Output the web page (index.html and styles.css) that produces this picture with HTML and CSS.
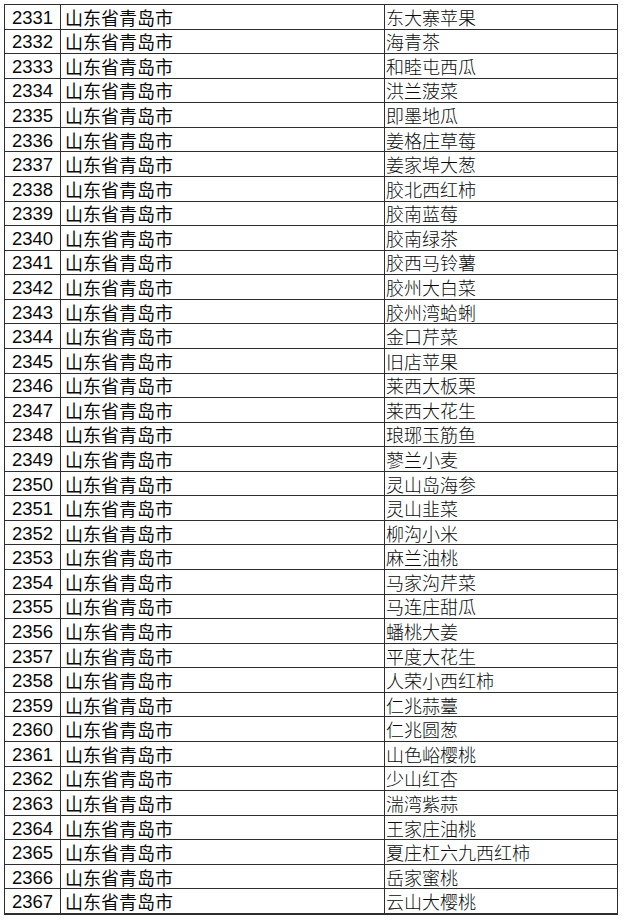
FILE: index.html
```html
<!DOCTYPE html>
<html lang="zh">
<head>
<meta charset="utf-8">
<link rel="stylesheet" href="styles.css">
</head>
<body>
<div class="sheet">
<div class="num">2331</div><div class="city">山东省青岛市</div><div class="name">东大寨苹果</div>
<div class="num">2332</div><div class="city">山东省青岛市</div><div class="name">海青茶</div>
<div class="num">2333</div><div class="city">山东省青岛市</div><div class="name">和睦屯西瓜</div>
<div class="num">2334</div><div class="city">山东省青岛市</div><div class="name">洪兰菠菜</div>
<div class="num">2335</div><div class="city">山东省青岛市</div><div class="name">即墨地瓜</div>
<div class="num">2336</div><div class="city">山东省青岛市</div><div class="name">姜格庄草莓</div>
<div class="num">2337</div><div class="city">山东省青岛市</div><div class="name">姜家埠大葱</div>
<div class="num">2338</div><div class="city">山东省青岛市</div><div class="name">胶北西红柿</div>
<div class="num">2339</div><div class="city">山东省青岛市</div><div class="name">胶南蓝莓</div>
<div class="num">2340</div><div class="city">山东省青岛市</div><div class="name">胶南绿茶</div>
<div class="num">2341</div><div class="city">山东省青岛市</div><div class="name">胶西马铃薯</div>
<div class="num">2342</div><div class="city">山东省青岛市</div><div class="name">胶州大白菜</div>
<div class="num">2343</div><div class="city">山东省青岛市</div><div class="name">胶州湾蛤蜊</div>
<div class="num">2344</div><div class="city">山东省青岛市</div><div class="name">金口芹菜</div>
<div class="num">2345</div><div class="city">山东省青岛市</div><div class="name">旧店苹果</div>
<div class="num">2346</div><div class="city">山东省青岛市</div><div class="name">莱西大板栗</div>
<div class="num">2347</div><div class="city">山东省青岛市</div><div class="name">莱西大花生</div>
<div class="num">2348</div><div class="city">山东省青岛市</div><div class="name">琅琊玉筋鱼</div>
<div class="num">2349</div><div class="city">山东省青岛市</div><div class="name">蓼兰小麦</div>
<div class="num">2350</div><div class="city">山东省青岛市</div><div class="name">灵山岛海参</div>
<div class="num">2351</div><div class="city">山东省青岛市</div><div class="name">灵山韭菜</div>
<div class="num">2352</div><div class="city">山东省青岛市</div><div class="name">柳沟小米</div>
<div class="num">2353</div><div class="city">山东省青岛市</div><div class="name">麻兰油桃</div>
<div class="num">2354</div><div class="city">山东省青岛市</div><div class="name">马家沟芹菜</div>
<div class="num">2355</div><div class="city">山东省青岛市</div><div class="name">马连庄甜瓜</div>
<div class="num">2356</div><div class="city">山东省青岛市</div><div class="name">蟠桃大姜</div>
<div class="num">2357</div><div class="city">山东省青岛市</div><div class="name">平度大花生</div>
<div class="num">2358</div><div class="city">山东省青岛市</div><div class="name">人荣小西红柿</div>
<div class="num">2359</div><div class="city">山东省青岛市</div><div class="name">仁兆蒜薹</div>
<div class="num">2360</div><div class="city">山东省青岛市</div><div class="name">仁兆圆葱</div>
<div class="num">2361</div><div class="city">山东省青岛市</div><div class="name">山色峪樱桃</div>
<div class="num">2362</div><div class="city">山东省青岛市</div><div class="name">少山红杏</div>
<div class="num">2363</div><div class="city">山东省青岛市</div><div class="name">湍湾紫蒜</div>
<div class="num">2364</div><div class="city">山东省青岛市</div><div class="name">王家庄油桃</div>
<div class="num">2365</div><div class="city">山东省青岛市</div><div class="name">夏庄杠六九西红柿</div>
<div class="num">2366</div><div class="city">山东省青岛市</div><div class="name">岳家蜜桃</div>
<div class="num">2367</div><div class="city">山东省青岛市</div><div class="name">云山大樱桃</div>
</div>
</body>
</html>
```

FILE: styles.css
```css
html, body {
  margin: 0;
  padding: 0;
  background: #ffffff;
}

body {
  padding: 4px 0 0 4px;
}

.sheet {
  display: grid;
  grid-template-columns: 55px 323px 232px;
  grid-template-rows: repeat(37, minmax(0, 1fr));
  gap: 1px;
  width: 614px;
  height: 911px;
  box-sizing: border-box;
  padding: 1px 2px 2px 1px;
  background: #2e2e2e;
}

.sheet > div {
  background: #ffffff;
  display: flex;
  align-items: center;
  color: #0a0a0a;
  line-height: 22px;
  white-space: nowrap;
  min-height: 0;
}

.num {
  justify-content: center;
  font-family: "Liberation Sans", Arial, sans-serif;
  font-size: 18.5px;
  padding-top: 2px;
}

.city {
  padding-left: 4px;
  font-family: "Noto Sans CJK SC", sans-serif;
  font-size: 18px;
}

.name {
  padding-left: 1px;
  font-family: "Noto Sans CJK SC", sans-serif;
  font-weight: 300;
  font-size: 18px;
}
```
